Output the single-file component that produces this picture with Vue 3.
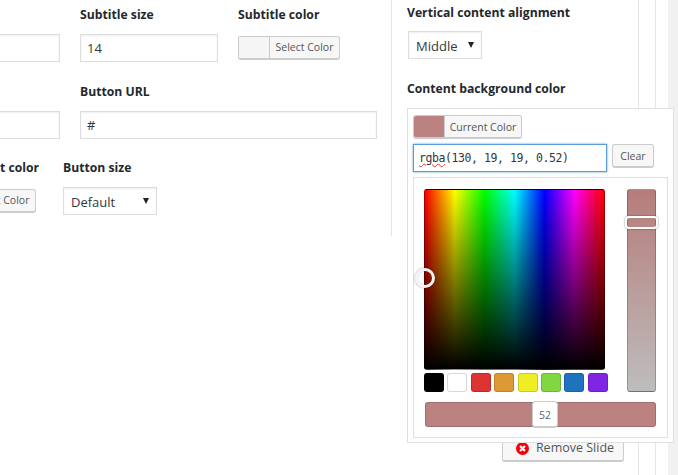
<template>
  <div class="page">
    <div class="main">
      <section class="left">
        <div class="row row1">
          <div class="field f-a"><label>&nbsp;</label><input class="inp" /></div>
          <div class="field f-b"><label>Subtitle size</label><input class="inp" value="14" /></div>
          <div class="field f-c">
            <label>Subtitle color</label>
            <button class="cbtn"><span class="swatch"></span><span class="ctext">Select Color</span></button>
          </div>
        </div>
        <div class="row row2">
          <div class="field f-a"><input class="inp" /></div>
          <div class="field f-url"><label>Button URL</label><input class="inp" value="#" /></div>
        </div>
        <div class="row row3">
          <div class="field f-tc">
            <label class="clip-r">Button text color</label>
            <button class="cbtn clip-btn"><span class="swatch"></span><span class="ctext">Select Color</span></button>
          </div>
          <div class="field f-size">
            <label>Button size</label>
            <div class="sel sel-default">Default<i class="tri"></i></div>
          </div>
        </div>
      </section>

      <section class="right">
        <label>Vertical content alignment</label>
        <div class="sel sel-middle">Middle<i class="tri"></i></div>
        <label class="cbg">Content background color</label>

        <button class="remove"><span class="xicon"><svg viewBox="0 0 14 14" width="13" height="13"><circle cx="7" cy="7" r="7" fill="#f4000c"/><path d="M4.4 4.4l5.2 5.2M9.6 4.4l-5.2 5.2" stroke="#fff" stroke-width="2.4"/></svg></span>Remove Slide</button>

        <div class="popup">
          <div class="cur">
            <span class="cur-sw"></span><span class="cur-t">Current Color</span>
          </div>
          <div class="line">
            <div class="hex"><span class="typo">rgba</span>(130, 19, 19, 0.52)</div>
            <button class="clear">Clear</button>
          </div>
          <div class="iris">
            <div class="top">
              <div class="sq">
                <span class="sq-handle"></span>
              </div>
              <div class="strip"><span class="strip-handle"></span></div>
            </div>
            <div class="pal">
              <span v-for="c in palette" :key="c" class="pc" :style="{ background: c }"></span>
            </div>
            <div class="alpha"><span class="alpha-h">52</span></div>
          </div>
        </div>
      </section>

      <div class="rail"></div>
    </div>
  </div>
</template>

<script setup>
const palette = ['#000000', '#ffffff', '#dd3333', '#dd9933', '#eeee22', '#81d742', '#1e73be', '#8224e3']
</script>

<style>
html, body { margin: 0; background: #fff; overflow: hidden; }
</style>

<style scoped>
.page {
  width: 678px; height: 475px; overflow: hidden; position: relative;
  font-family: "Open Sans", sans-serif; color: #32373c; background: #f1f1f1;
}
.main { display: flex; height: 475px; width: 668px; background: #fff; }
label { display: block; font-size: 12.2px; font-weight: 700; line-height: 20px; color: #23282d; white-space: nowrap; }
.left { width: 391px; flex: none; height: 236px; border-right: 1px solid #e5e5e5; box-sizing: content-box; position: relative; overflow: hidden; }
.row { display: flex; }
.row1 { padding-top: 5px; }
.row2 { padding-top: 20px; }
.row3 { padding-top: 19px; }
.field { flex: none; }
.inp {
  display: block; box-sizing: border-box; height: 28px; border: 1px solid #ddd; padding: 0 6px;
  font: 13px/26px "Open Sans", sans-serif; color: #32373c; background: #fff; outline: none;
  box-shadow: inset 0 1px 2px rgba(0,0,0,.07); width: 100%; margin-top: 9px;
}
.f-a { width: 60px; margin-left: 0; }
.f-a .inp { margin-left: -10px; width: 70px; }
.f-b { width: 138px; margin-left: 20px; margin-right: 20px; }
.f-c { width: 102px; }
.row2 .f-a .inp { margin-top: 29px; }
.f-url { margin-left: 20px; width: 297px; }
.cbtn {
  display: flex; padding: 0; margin-top: 11px; height: 24px; width: 102px; box-sizing: border-box;
  border: 1px solid #ccc; border-bottom-width: 2px; border-radius: 3px; background: #f7f7f7; overflow: hidden;
  font-family: "Open Sans", sans-serif;
}
.swatch { width: 30px; background: #f5f5f5; border-right: 1px solid #ccc; flex: none; }
.ctext { flex: 1; font-size: 10.5px; line-height: 21px; color: #555; text-align: center; white-space: nowrap; }
.f-tc { width: 39px; margin-right: 24px; position: relative; height: 60px; overflow: hidden; }
.clip-r { position: absolute; right: 0; top: 0; }
.clip-btn { position: absolute; right: 3px; top: 31px; margin-top: 0; }
.f-size { width: 94px; }
.sel {
  box-sizing: border-box; border: 1px solid #ddd; background: #fff; font-size: 13px; color: #32373c;
  height: 28px; line-height: 28px; position: relative; box-shadow: inset 0 1px 2px rgba(0,0,0,.07);
}
.sel-default { width: 94px; margin-top: 9px; padding-left: 7px; }
.sel-middle { width: 74px; margin: 8px 0 0 1px; padding-left: 7px; }
.tri { position: absolute; right: 7px; top: 10px; width: 0; height: 0; border: 3.5px solid transparent; border-top: 6px solid #222; border-bottom: 0; }
.right { flex: none; width: 247px; height: 475px; border-right: 1px solid #e5e5e5; position: relative; padding: 3px 0 0 15px; box-sizing: border-box; }
.cbg { margin-top: 20px; }
.rail { flex: none; width: 16px; height: 475px; border-right: 1px solid #e5e5e5; background: #fff; }
.remove {
  position: absolute; left: 110px; top: 433px; width: 122px; height: 29px; box-sizing: border-box; padding: 2px 0 0 4px;
  border: 1px solid #ccc; border-bottom-width: 2px; border-radius: 3px; background: #f7f7f7;
  font: 12.5px/24px "Open Sans", sans-serif; color: #555; display: flex; align-items: center; justify-content: center;
}
.xicon { display: flex; margin-right: 7px; }
.popup {
  position: absolute; left: 15px; top: 108px; width: 267px; height: 335px; box-sizing: border-box;
  border: 1px solid #dfdfdf; background: #fff; padding: 6px 5px 5px 5px; z-index: 2;
}
.cur {
  display: flex; width: 109px; height: 24px; box-sizing: border-box; border: 1px solid #ccc; border-bottom-width: 2px;
  border-radius: 3px; overflow: hidden; background: #f7f7f7; font-size: 10.5px; line-height: 22px; color: #555;
}
.cur-sw { width: 30px; background: #bc8281; border-right: 1px solid #ccc; flex: none; }
.cur-t { flex: 1; text-align: center; white-space: nowrap; }
.line { display: flex; margin-top: 5px; justify-content: space-between; padding-right: 14px; }
.hex {
  width: 194px; height: 28px; box-sizing: border-box; border: 1px solid #5b9dd9; box-shadow: 0 0 2px rgba(30,140,190,.8);
  font: 11.5px/26px "DejaVu Sans Mono", monospace; letter-spacing: -0.42px; color: #32373c; padding-left: 5px; white-space: nowrap; overflow: hidden;
}
.typo { text-decoration: underline wavy #e33; text-decoration-thickness: 1px; }
.clear {
  width: 42px; height: 24px; box-sizing: border-box; padding: 0; border: 1px solid #ccc; border-bottom-width: 2px; border-radius: 3px;
  background: #f7f7f7; font: 10.5px/20px "Open Sans", sans-serif; color: #555;
}
.iris {
  margin-top: 5px; width: 255px; height: 261px; box-sizing: border-box; border: 1px solid #dfdfdf; padding: 11px 11px 0 10px; position: relative;
}
.top { display: flex; justify-content: space-between; align-items: flex-start; }
.sq {
  width: 181px; height: 181px; box-sizing: border-box; border: 1px solid rgba(0,0,0,.3); border-radius: 3px; position: relative;
  background: linear-gradient(to bottom, transparent, #000),
    linear-gradient(to right, #f00, #ff0, #0f0, #0ff, #00f, #f0f, #f00);
}
.sq-handle { position: absolute; left: -10px; top: 78px; width: 20px; height: 20px; box-sizing: border-box; border-radius: 50%; border: 3px solid #f4f4f4; box-shadow: 0 0 2px rgba(0,0,0,.5), inset 0 0 1px rgba(0,0,0,.4); }
.strip {
  width: 29px; height: 203px; box-sizing: border-box; border: 1px solid rgba(0,0,0,.2); border-radius: 3px; position: relative;
  background: linear-gradient(to bottom, #b67d7a, #bdbdbd);
}
.strip-handle { position: absolute; left: -3px; top: 26px; width: 33px; height: 13px; box-sizing: border-box; border: 2px solid #fff; border-radius: 4px; box-shadow: 0 0 2px rgba(0,0,0,.55); background: transparent; }
.pal { position: absolute; left: 10px; top: 195px; display: flex; gap: 3.4px; }
.pc { width: 20px; height: 19px; box-sizing: border-box; border-radius: 3px; border: 1px solid rgba(0,0,0,.15); }
.alpha {
  position: absolute; left: 11px; top: 224px; width: 231px; height: 25px; box-sizing: border-box;
  background: #bc8281; border: 1px solid rgba(0,0,0,.15); border-radius: 3px;
}
.alpha-h {
  position: absolute; left: 106px; top: -2px; width: 26px; height: 27px; box-sizing: border-box; background: #fff;
  border: 1px solid #ccc; border-bottom-width: 2px; border-radius: 4px; font-size: 10.5px; line-height: 26px; text-align: center; color: #666;
}
</style>
